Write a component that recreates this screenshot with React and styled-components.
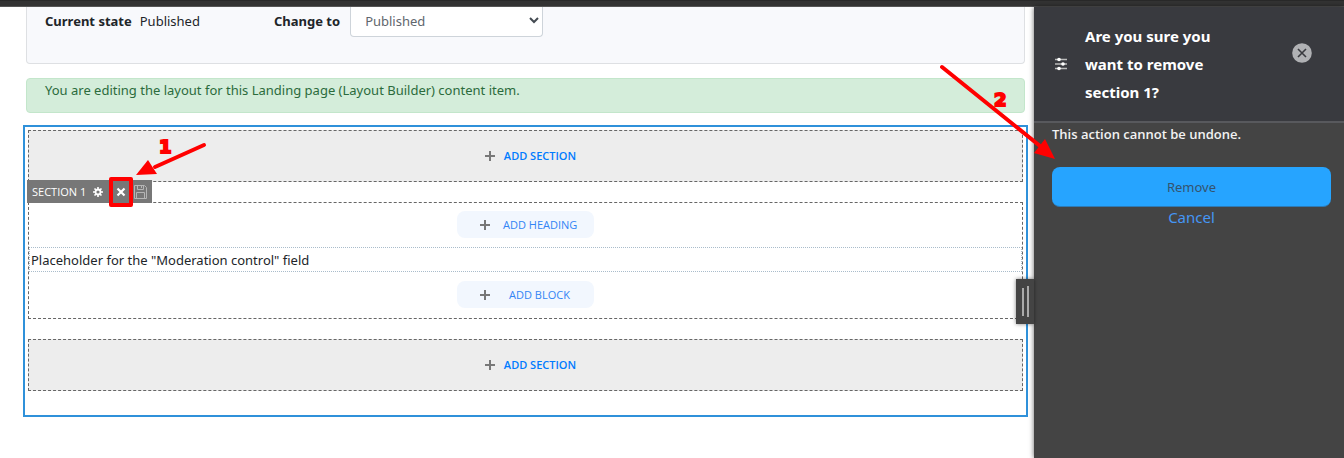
import React from "react";
import styled, { createGlobalStyle } from "styled-components";

const GlobalStyle = createGlobalStyle`
  *, *::before, *::after { box-sizing: border-box; }
  body {
    margin: 0;
    background: #fff;
    color: #212529;
    font: 13px/20px "Noto Sans", "Open Sans", sans-serif;
  }
  button, select { font: inherit; }
`;

const Page = styled.div`
  display: flex;
  flex-direction: column;
  min-height: 100vh;
  overflow: hidden;
`;

const TopBar = styled.div`
  height: 7px;
  background: #333;
  border-top: 1px solid #292929;
  border-bottom: 1px solid #555;
`;

const Columns = styled.div`
  flex: 1;
  display: flex;
`;

const Main = styled.main`
  flex: 1;
  min-width: 0;
  padding: 0 6px 40px 23px;
`;

const StatePanel = styled.form`
  display: flex;
  align-items: flex-start;
  height: 57px;
  margin: 0 3px 14px;
  padding-left: 18px;
  background: #f8f9fc;
  border: 1px solid #dee0e3;
  border-top: 0;
  border-radius: 0 0 4px 4px;
`;

const StateItem = styled.div`
  display: flex;
  gap: 8px;
  margin-right: 74px;
  padding-top: 4px;
`;

const StateLabel = styled.label`
  font-weight: 700;
`;

const StateField = styled.div`
  display: flex;
  gap: 10px;

  ${StateLabel} { padding-top: 4px; }
`;

const SelectWrap = styled.div`
  position: relative;
  color: #495057;

  svg {
    position: absolute;
    right: 4px;
    top: 8px;
    pointer-events: none;
  }
`;

const Select = styled.select`
  appearance: none;
  display: block;
  width: 193px;
  height: 30px;
  padding: 0 24px 2px 14px;
  color: #5f666d;
  background: #fff;
  border: 1px solid #ced4da;
  border-top: 0;
  border-radius: 0 0 4px 4px;
`;

const Notice = styled.div`
  height: 35px;
  margin: 0 3px 12px;
  padding: 1px 18px;
  color: #2b6b3c;
  background: #d4edda;
  border: 1px solid #c3e6cb;
  border-radius: 4px;
`;

const Layout = styled.div`
  padding: 3px 3px 24px;
  border: 2px solid #2f91da;
`;

const AddSection = styled.div`
  display: flex;
  align-items: center;
  justify-content: center;
  height: 52px;
  padding-left: 9px;
  background: #ededed;
  border: 1px dashed #666;
`;

const AddLink = styled.a`
  display: flex;
  align-items: center;
  gap: 8px;
  font: 600 11px/16px "Open Sans", "Noto Sans", sans-serif;
  color: #007bff;
  text-decoration: none;
`;

const Section = styled.section`
  position: relative;
  display: flex;
  flex-direction: column;
  align-items: center;
  gap: 9px;
  margin: 20px 0;
  padding: 8px 0 10px;
  border: 1px dashed #666;
`;

const SectionTools = styled.div`
  position: absolute;
  left: -2px;
  bottom: 100%;
  display: flex;
  align-items: center;
  height: 23px;
  padding: 0 5px;
  color: #fff;
  background: #777;
  font: 11px/23px "Open Sans", "Noto Sans", sans-serif;
`;

const ToolLabel = styled.span`
  margin-right: 5px;
  white-space: nowrap;
`;

const ToolButton = styled.button`
  display: flex;
  align-items: center;
  justify-content: center;
  width: ${(p) => p.$width}px;
  height: 23px;
  padding: 0;
  color: inherit;
  background: none;
  border: 0;
`;

const Highlight = styled.span`
  display: flex;
  align-items: center;
  justify-content: center;
  flex: none;
  width: 24px;
  height: 30px;
  margin: 0 0 0 4px;
  border: 4px solid #f00;
  border-radius: 2px;
`;

const Callout = styled.svg`
  position: absolute;
  z-index: 3;
  left: ${(p) => p.$left}px;
  top: ${(p) => p.$top}px;
  overflow: visible;
  pointer-events: none;

  text { font: 900 18px "DejaVu Sans", sans-serif; fill: #f00; stroke: #f00; stroke-width: 2; }
`;

const Pill = styled.a`
  display: grid;
  grid-template-columns: 12px 1fr;
  align-items: center;
  gap: 12px;
  width: 137px;
  height: 27px;
  padding: 0 18px 0 22px;
  font: 11px/16px "Open Sans", "Noto Sans", sans-serif;
  color: #3385f5;
  text-align: center;
  text-decoration: none;
  white-space: nowrap;
  background: #f2f7fe;
  border-radius: 8px;
`;

const Block = styled.div`
  align-self: stretch;
  height: 25px;
  padding: 2px 1px;
  border: 1px dotted #a9bccb;
`;

const Sidebar = styled.aside`
  position: relative;
  flex: none;
  width: 310px;
  color: #f2f2f2;
  background: #444;
  box-shadow: 0 0 5px rgba(0, 0, 0, 0.6);
`;

const SidebarHeader = styled.header`
  display: flex;
  align-items: center;
  height: 116px;
  padding: 0 32px 0 20px;
  background: #393a3f;
  border-bottom: 2px solid #58595d;
`;

const Title = styled.h2`
  width: 144px;
  margin: 0 auto 0 17px;
  font: 700 15px/28px "Noto Sans", sans-serif;
  color: #fff;
`;

const CloseButton = styled.button`
  display: flex;
  align-self: flex-start;
  margin-top: 36px;
  padding: 0;
  background: none;
  border: 0;
`;

const SidebarBody = styled.div`
  padding: 1px 13px 0 18px;
`;

const Message = styled.p`
  margin: 0 0 23px;
  font: 600 13px/20px "Open Sans", "Noto Sans", sans-serif;
`;

const Remove = styled.button`
  display: block;
  width: 100%;
  height: 40px;
  color: #35536e;
  background: #26a4ff;
  border: 0;
  border-bottom: 1px solid #2d7ab5;
  border-radius: 8px;
`;

const Cancel = styled.a`
  display: block;
  font-size: 15px;
  color: #4596f5;
  text-align: center;
  text-decoration: none;
`;

const Resizer = styled.button`
  position: absolute;
  left: -18px;
  top: 272px;
  display: flex;
  align-items: center;
  gap: 3px;
  width: 18px;
  height: 45px;
  padding: 0 0 0 6px;
  background: #444;
  border: 0;
  box-shadow: 0 0 4px rgba(0, 0, 0, 0.5);

  &::before, &::after {
    content: "";
    width: 2px;
    height: 28px;
    background: #aaa;
  }
  &::after { height: 31px; }
`;

const Plus = () => (
  <svg width="12" height="12" viewBox="0 0 12 12" aria-hidden="true">
    <path d="M6 1v10M1 6h10" stroke="#787878" strokeWidth="2" />
  </svg>
);

const Gear = () => (
  <svg width="10" height="10" viewBox="0 0 10 10" aria-hidden="true">
    <circle cx="5" cy="5" r="2.5" fill="none" stroke="#fff" strokeWidth="1.8" />
    <path d="M5 0v2M5 8v2M0 5h2M8 5h2M1.5 1.5l1.4 1.4M7.1 7.1l1.4 1.4M8.5 1.5L7.1 2.9M2.9 7.1L1.5 8.5" stroke="#fff" strokeWidth="1.6" />
  </svg>
);

const Cross = () => (
  <svg width="10" height="10" viewBox="0 0 10 10" aria-hidden="true">
    <path d="M1.5 1.5l7 7M8.5 1.5l-7 7" stroke="#fff" strokeWidth="2.2" />
  </svg>
);

const Disk = () => (
  <svg width="13" height="14" viewBox="0 0 13 14" fill="none" stroke="#b5b5b5" aria-hidden="true">
    <path d="M.5 .5h10l2 2v11H.5zM3.5 .5v4h6v-4M2.5 13.5v-6h8v6M7.5 1v2" />
  </svg>
);

const Sliders = () => (
  <svg width="14" height="14" viewBox="0 0 14 14" aria-hidden="true">
    <path d="M1 2.5h12M1 7h12M1 11.5h12" stroke="#bbb" strokeWidth="1.4" />
    <g fill="#fff">
      <circle cx="5" cy="2.5" r="1.8" />
      <circle cx="9" cy="7" r="1.8" />
      <circle cx="5" cy="11.5" r="1.8" />
    </g>
  </svg>
);

const CloseIcon = () => (
  <svg width="20" height="20" viewBox="0 0 20 20" aria-hidden="true">
    <circle cx="10" cy="10" r="9.8" fill="#b0b1b4" />
    <path d="M6 6l8 8M14 6l-8 8" stroke="#393a3f" strokeWidth="1.6" />
  </svg>
);

export default function App() {
  return (
    <>
      <GlobalStyle />
      <Page>
        <TopBar />
        <Columns>
          <Main>
            <StatePanel>
              <StateItem>
                <StateLabel as="strong">Current state</StateLabel>
                <span>Published</span>
              </StateItem>
              <StateField>
                <StateLabel htmlFor="state">Change to</StateLabel>
                <SelectWrap>
                  <Select id="state" defaultValue="published">
                    <option value="published">Published</option>
                  </Select>
                  <svg width="10" height="10" viewBox="0 0 10 10" aria-hidden="true">
                    <path d="M1 3l4 4 4-4" fill="none" stroke="#444b52" strokeWidth="2" />
                  </svg>
                </SelectWrap>
              </StateField>
            </StatePanel>
            <Notice role="status">
              You are editing the layout for this Landing page (Layout Builder) content item.
            </Notice>
            <Layout>
              <AddSection>
                <AddLink href="#add-first"><Plus />ADD SECTION</AddLink>
              </AddSection>
              <Section>
                <SectionTools>
                  <ToolLabel>SECTION 1</ToolLabel>
                  <ToolButton $width={14} aria-label="Configure section 1"><Gear /></ToolButton>
                  <Highlight>
                    <ToolButton $width={16} aria-label="Remove section 1"><Cross /></ToolButton>
                  </Highlight>
                  <ToolButton $width={14} aria-label="Save section 1"><Disk /></ToolButton>
                  <Callout $left={108} $top={-44} width="72" height="44" aria-hidden="true">
                    <path d="M69 9L20 31" stroke="#f00" strokeWidth="4" strokeLinecap="round" />
                    <path d="M1 39L13 24L22 38Z" fill="#f00" />
                    <text x="24" y="17">1</text>
                  </Callout>
                </SectionTools>
                <Pill href="#add-heading"><Plus /><span>ADD HEADING</span></Pill>
                <Block>Placeholder for the "Moderation control" field</Block>
                <Pill href="#add-block"><Plus /><span>ADD BLOCK</span></Pill>
              </Section>
              <AddSection>
                <AddLink href="#add-last"><Plus />ADD SECTION</AddLink>
              </AddSection>
            </Layout>
          </Main>
          <Sidebar>
            <Resizer aria-label="Resize panel" />
            <SidebarHeader>
              <Sliders />
              <Title>Are you sure you want to remove section 1?</Title>
              <CloseButton aria-label="Close"><CloseIcon /></CloseButton>
            </SidebarHeader>
            <SidebarBody>
              <Message>This action cannot be undone.</Message>
              <Remove>Remove</Remove>
              <Cancel href="#cancel">Cancel</Cancel>
            </SidebarBody>
            <Callout $left={-96} $top={56} width="120" height="100" aria-hidden="true">
              <path d="M4 4L102 83" stroke="#f00" strokeWidth="4" strokeLinecap="round" />
              <path d="M117 96L96 90L107 76Z" fill="#f00" />
              <text x="56" y="43">2</text>
            </Callout>
          </Sidebar>
        </Columns>
      </Page>
    </>
  );
}
